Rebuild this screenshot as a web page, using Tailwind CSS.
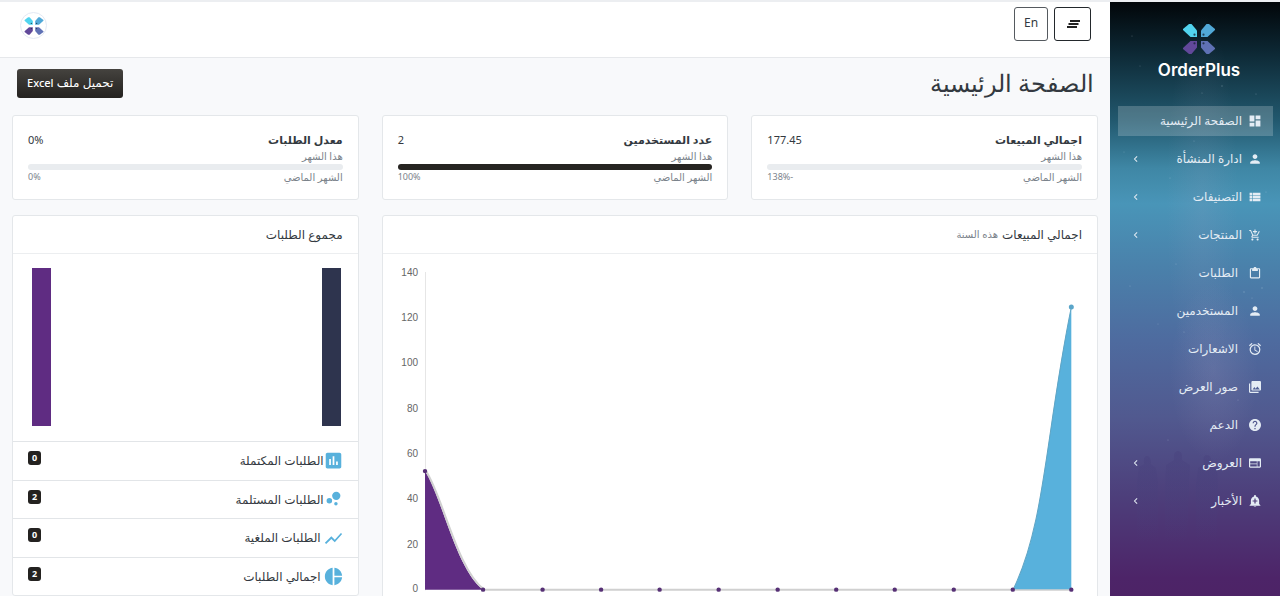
<!DOCTYPE html>
<html lang="ar" dir="rtl">
<head>
<meta charset="utf-8">
<meta name="viewport" content="width=device-width, initial-scale=1">
<title>OrderPlus</title>
<script src="https://cdn.jsdelivr.net/npm/@tailwindcss/browser@4"></script>
</head>
<body class="h-screen overflow-hidden bg-[#f8f9fb] pt-0.5 font-['Noto_Sans','DejaVu_Sans',sans-serif] text-[#333940] shadow-[inset_0_2px_0_#eceef1]">

<svg class="hidden" aria-hidden="true">
  <defs>
    <symbol id="logo" viewBox="0 0 34 34">
      <path fill="#51d4ef" d="M1 7 7 2h2.500l5.500 6.500V15H8.500L1 8z"/>
      <path fill="#51a9d8" d="M33 7 27 2h-2.500L19 8.500V15h6.500L33 8z"/>
      <path fill="#61489a" d="M1 27 7 32h2.500l5.500-6.500V19H8.500L1 26z"/>
      <path fill="#5f71b5" d="M33 27 27 32h-2.500L19 25.500V19h6.500L33 26z"/>
      <g fill="#123" fill-opacity=".75"><circle cx="12.500" cy="12.700" r="1.100"/><circle cx="21.500" cy="12.700" r="1.100"/><circle cx="12.500" cy="21.300" r="1.100"/><circle cx="21.500" cy="21.300" r="1.100"/></g>
    </symbol>
    <symbol id="person" viewBox="0 0 24 24"><path d="M12 12c2.210 0 4-1.790 4-4s-1.790-4-4-4-4 1.790-4 4 1.790 4 4 4zm0 2c-2.670 0-8 1.340-8 4v2h16v-2c0-2.660-5.330-4-8-4z"/></symbol>
    <symbol id="chev" viewBox="0 0 8 10"><path d="M5.500 1.500 2 5l3.500 3.500" fill="none" stroke="currentColor" stroke-width="1.400"/></symbol>
  </defs>
</svg>

<div class="flex h-full">

  <aside class="relative w-[170px] shrink-0 overflow-hidden bg-[linear-gradient(180deg,#020609_0%,#0c2632_8%,#22596f_20%,#3f87a5_28%,#4995b8_34%,#4a80aa_45%,#4e6b9f_57%,#51598f_70%,#4d3f7b_83%,#4d2468_97%,#4d2366_100%)] text-[#e4ecf4]">
    <svg class="absolute inset-0 h-full w-full" viewBox="0 0 170 594" preserveAspectRatio="none" aria-hidden="true">
      <defs>
        <radialGradient id="haze"><stop offset="0" stop-color="#b9a8c8" stop-opacity=".16"/><stop offset="1" stop-color="#b9a8c8" stop-opacity="0"/></radialGradient>
        <linearGradient id="crowd" x2="0" y2="1"><stop offset="0" stop-color="#47407c" stop-opacity=".4"/><stop offset="1" stop-color="#47407c" stop-opacity="0"/></linearGradient>
      </defs>
      <ellipse cx="92" cy="200" rx="36" ry="190" fill="url(#haze)" opacity=".7"/>
      <ellipse cx="104" cy="370" rx="44" ry="90" fill="url(#haze)"/>
      <path fill="url(#crowd)" d="M27 540v-60l2-15 5-3q-1-8 3-8t4 8l5 4 2 14v60zM55 540v-55l1-22 8-5q-1-9 4-9t4 9l8 5-1 22-2 55zM86 540v-58l2-16 6-4q-2-9 3-9t4 9l6 4 1 16-1 58z"/>
      <g fill="#dce9f5" fill-opacity=".3"><circle cx="22" cy="34" r=".6"/><circle cx="92" cy="91" r=".6"/><circle cx="112" cy="84" r=".7"/><circle cx="30" cy="64" r=".5"/><circle cx="84" cy="139" r=".6"/><circle cx="60" cy="176" r=".6"/><circle cx="146" cy="92" r=".6"/><circle cx="134" cy="290" r=".7"/><circle cx="142" cy="296" r=".6"/><circle cx="152" cy="286" r=".7"/><circle cx="20" cy="284" r=".6"/><circle cx="66" cy="262" r=".6"/><circle cx="48" cy="322" r=".5"/><circle cx="118" cy="236" r=".6"/><circle cx="74" cy="330" r=".6"/><circle cx="58" cy="438" r=".6"/><circle cx="106" cy="420" r=".7"/><circle cx="14" cy="150" r=".5"/><circle cx="156" cy="190" r=".6"/><circle cx="128" cy="398" r=".6"/></g>
    </svg>
    <div class="relative">
      <a href="#" class="flex flex-col items-center ps-2 pt-5 text-white" dir="ltr">
        <svg class="h-[34px] w-[34px]"><use href="#logo"/></svg>
        <span class="font-['Inter',sans-serif] text-[17px] leading-7 font-semibold">OrderPlus</span>
      </a>
      <nav class="mt-[22px] flex flex-col gap-2 ps-[7px] pe-2 text-[12px]">
        <a href="#" class="flex h-[30px] items-center bg-white/20 ps-3"><svg class="h-3 w-3" viewBox="2 2 20 20" fill="currentColor"><path d="M3 13h8V3H3v10zm0 8h8v-6H3v6zm10 0h8V11h-8v10zm0-18v6h8V3h-8z"/></svg><span class="ms-[7px]">الصفحة الرئيسية</span></a>
        <a href="#" class="flex h-[30px] items-center ps-3"><svg class="h-3 w-3" viewBox="2 2 20 20" fill="currentColor"><use href="#person" width="24" height="24"/></svg><span class="ms-[7px]">ادارة المنشأة</span><svg class="ms-auto me-[15px] h-2 w-1.5"><use href="#chev"/></svg></a>
        <a href="#" class="flex h-[30px] items-center ps-3"><svg class="h-3 w-3" viewBox="2 2 20 20" fill="currentColor"><path d="M3 14h4v-4H3v4zm0 5h4v-4H3v4zM3 9h4V5H3v4zm5 5h13v-4H8v4zm0 5h13v-4H8v4zM8 5v4h13V5H8z"/></svg><span class="ms-[7px]">التصنيفات</span><svg class="ms-auto me-[15px] h-2 w-1.5"><use href="#chev"/></svg></a>
        <a href="#" class="flex h-[30px] items-center ps-3"><svg class="h-3 w-3" viewBox="1 0 22 23" fill="currentColor"><path d="M11 9h2V6h3V4h-3V1h-2v3H8v2h3v3zm-4 9c-1.100 0-1.990.9-1.990 2S5.900 22 7 22s2-.9 2-2-.9-2-2-2zm10 0c-1.100 0-1.990.9-1.990 2s.89 2 1.990 2 2-.9 2-2-.9-2-2-2zm-9.830-3.250l.03-.12.9-1.630h7.450c.75 0 1.410-.41 1.750-1.030l3.860-7.010L19.420 4h-.01l-1.100 2-2.760 5H8.530l-.13-.27L6.160 6l-.95-2-.94-2H1v2h2l3.600 7.590-1.350 2.450c-.16.28-.25.61-.25.960 0 1.100.9 2 2 2h12v-2H7.420c-.13 0-.25-.11-.25-.25z"/></svg><span class="ms-[7px]">المنتجات</span><svg class="ms-auto me-[15px] h-2 w-1.5"><use href="#chev"/></svg></a>
        <a href="#" class="flex h-[30px] items-center ps-3"><svg class="h-3 w-3" viewBox="2 1 20 21" fill="currentColor"><path d="M19 3h-4.180C14.400 1.840 13.300 1 12 1s-2.400.84-2.820 2H5c-1.100 0-2 .9-2 2v14c0 1.100.9 2 2 2h14c1.100 0 2-.9 2-2V5c0-1.100-.9-2-2-2zm0 16H5V5h2v3h10V5h2v14z"/></svg><span class="ms-[11px]">الطلبات</span></a>
        <a href="#" class="flex h-[30px] items-center ps-3"><svg class="h-3 w-3" viewBox="2 2 20 20" fill="currentColor"><use href="#person" width="24" height="24"/></svg><span class="ms-[11px]">المستخدمين</span></a>
        <a href="#" class="flex h-[30px] items-center ps-3"><svg class="h-3 w-3" viewBox="2 2 20 20" fill="currentColor"><path d="M22 5.720l-4.600-3.860-1.290 1.530 4.600 3.860L22 5.720zM7.880 3.390L6.600 1.860 2 5.710l1.290 1.530 4.590-3.850zM12.500 8H11v6l4.750 2.850.75-1.230-4-2.370V8zM12 4c-4.970 0-9 4.030-9 9s4.020 9 9 9a9 9 0 0 0 0-18zm0 16c-3.870 0-7-3.130-7-7s3.130-7 7-7 7 3.130 7 7-3.130 7-7 7z"/></svg><span class="ms-[11px]">الاشعارات</span></a>
        <a href="#" class="flex h-[30px] items-center ps-3"><svg class="h-3 w-3" viewBox="2 2 20 20" fill="currentColor"><path d="M22 16V4c0-1.100-.9-2-2-2H8c-1.100 0-2 .9-2 2v12c0 1.100.9 2 2 2h12c1.100 0 2-.9 2-2zm-11-4l2.030 2.710L16 11l4 5H8l3-4zM2 6v14c0 1.100.9 2 2 2h14v-2H4V6H2z"/></svg><span class="ms-[11px]">صور العرض</span></a>
        <a href="#" class="flex h-[30px] items-center ps-3"><svg class="h-3 w-3" viewBox="2 2 20 20" fill="currentColor"><path d="M12 2C6.480 2 2 6.480 2 12s4.480 10 10 10 10-4.480 10-10S17.520 2 12 2zm1 17h-2v-2h2v2zm2.070-7.750l-.9.920C13.450 12.900 13 13.500 13 15h-2v-.5c0-1.100.45-2.100 1.170-2.830l1.240-1.260c.37-.36.59-.86.59-1.410 0-1.100-.9-2-2-2s-2 .9-2 2H8c0-2.210 1.790-4 4-4s4 1.790 4 4c0 .88-.36 1.680-.93 2.250z"/></svg><span class="ms-[11px]">الدعم</span></a>
        <a href="#" class="flex h-[30px] items-center ps-3"><svg class="h-3 w-3" viewBox="2 2 20 20" fill="currentColor"><path d="M20 4H4c-1.100 0-1.990.9-1.990 2L2 18c0 1.100.9 2 2 2h16c1.100 0 2-.9 2-2V6c0-1.100-.9-2-2-2zm-5 14H4v-4h11v4zm0-5H4V9h11v4zm5 5h-4V9h4v9z"/></svg><span class="ms-[7px]">العروض</span><svg class="ms-auto me-[15px] h-2 w-1.5"><use href="#chev"/></svg></a>
        <a href="#" class="flex h-[30px] items-center ps-3"><svg class="h-3 w-3" viewBox="2 2 20 20" fill="currentColor"><path d="M10.010 21.010c0 1.100.89 1.990 1.990 1.990s1.990-.89 1.990-1.990h-3.980zm8.870-4.190V11c0-3.250-2.250-5.970-5.290-6.690v-.72C13.590 2.710 12.880 2 12 2s-1.590.71-1.590 1.590v.72C7.370 5.030 5.120 7.750 5.120 11v5.820L3 18.940V20h18v-1.060l-2.120-2.120zM16 13.010h-3v3h-2v-3H8V11h3V8h2v3h3v2.010z"/></svg><span class="ms-[7px]">الأخبار</span><svg class="ms-auto me-[15px] h-2 w-1.5"><use href="#chev"/></svg></a>
      </nav>
    </div>
  </aside>

  <div class="min-w-0 flex-1">
    <header class="flex h-14 items-start justify-between border-b border-[#e6e8eb] bg-white ps-[19px] pe-5 pt-[5px]">
      <div class="flex gap-1.5">
        <button type="button" aria-label="القائمة" class="flex h-[34px] w-[37px] items-center justify-center rounded-[3px] border border-[#23282c]"><svg class="h-3 w-3.5" viewBox="0 0 14 12" stroke="#222" stroke-width="2"><path d="M4 3h10M2.500 6h10M1 9h10"/></svg></button>
        <button type="button" class="h-[34px] w-[34px] rounded-[3px] border border-[#555a5f] pb-0.5 text-[12px]">En</button>
      </div>
      <a href="#" aria-label="OrderPlus" class="mt-[5px] flex h-[27px] w-[27px] items-center justify-center rounded-full border border-[#e3e9f4]"><svg class="h-5 w-5"><use href="#logo"/></svg></a>
    </header>

    <main class="px-3">
      <div class="flex items-center justify-between ps-1 pe-[5px] pt-2.5">
        <h1 class="text-[24px] leading-[30px] font-light">الصفحة الرئيسية</h1>
        <button type="button" class="h-[29px] rounded-[3px] bg-linear-to-b from-[#45433f] to-[#24221f] px-2.5 text-[12px] font-medium text-white">تحميل ملف <span class="text-[11px]">Excel</span></button>
      </div>

      <div class="mt-[17px] grid grid-cols-3 gap-x-[23px] gap-y-[15px]">
        <section class="h-[85px] rounded-[3px] border border-[#e4e7ea] bg-white px-[15px] pt-4">
          <div class="flex justify-between text-[11px] leading-4"><h2 class="font-bold">اجمالي المبيعات</h2><span>177.45</span></div>
          <p class="text-[10px] leading-4 text-[#7b838b]">هذا الشهر</p>
          <div class="h-1.5 rounded-full bg-[#e9ecef]"></div>
          <div class="flex justify-between text-[10px] leading-[14px] text-[#7b838b]"><span>الشهر الماضي</span><span dir="ltr" class="text-[9px]">138%-</span></div>
        </section>
        <section class="h-[85px] rounded-[3px] border border-[#e4e7ea] bg-white px-[15px] pt-4">
          <div class="flex justify-between text-[11px] leading-4"><h2 class="font-bold">عدد المستخدمين</h2><span>2</span></div>
          <p class="text-[10px] leading-4 text-[#7b838b]">هذا الشهر</p>
          <div class="h-1.5 rounded-full bg-[#262421]"></div>
          <div class="flex justify-between text-[10px] leading-[14px] text-[#7b838b]"><span>الشهر الماضي</span><span dir="ltr" class="text-[9px]">100%</span></div>
        </section>
        <section class="h-[85px] rounded-[3px] border border-[#e4e7ea] bg-white px-[15px] pt-4">
          <div class="flex justify-between text-[11px] leading-4"><h2 class="font-bold">معدل الطلبات</h2><span dir="ltr">0%</span></div>
          <p class="text-[10px] leading-4 text-[#7b838b]">هذا الشهر</p>
          <div class="h-1.5 rounded-full bg-[#e9ecef]"></div>
          <div class="flex justify-between text-[10px] leading-[14px] text-[#7b838b]"><span>الشهر الماضي</span><span dir="ltr" class="text-[9px]">0%</span></div>
        </section>

        <section class="col-span-2 rounded-[3px] border border-[#e4e7ea] bg-white">
          <h2 class="flex h-[38px] items-center gap-1 border-b border-[#eceef0] px-[15px] text-[12px]">اجمالي المبيعات <small class="text-[10px] text-[#7b838b]">هذه السنة</small></h2>
          <svg class="block w-full" viewBox="1 0 714 344" direction="ltr" role="img" aria-label="اجمالي المبيعات">
            <g class="font-['Liberation_Sans',sans-serif] text-[10px]" fill="#666" text-anchor="end">
              <text x="36" y="22">140</text><text x="36" y="67">120</text><text x="36" y="112">100</text><text x="36" y="158">80</text><text x="36" y="203">60</text><text x="36" y="248">40</text><text x="36" y="294">20</text><text x="36" y="338">0</text>
            </g>
            <path d="M43.500 18v318" stroke="#e6e6e6"/>
            <path d="M43 217C60 243 74 315 101 335.500H43z" fill="#5f2c82"/>
            <path d="M44 217C61 243 75 315 102 335.500H689" fill="none" stroke="#d0d0d0" stroke-width="2"/>
            <path d="M631 335C663 270 663 180 689 53V335z" fill="#58b1dc"/>
            <path d="M631 335C663 270 663 180 689 53" fill="none" stroke="#5fa4c4" stroke-width="1"/>
            <g fill="#563075"><circle cx="43" cy="217" r="2.200"/><circle cx="101" cy="335.500" r="2.200"/><circle cx="160.500" cy="335.500" r="2.200"/><circle cx="219" cy="335.500" r="2.200"/><circle cx="277.500" cy="335.500" r="2.200"/><circle cx="336.500" cy="335.500" r="2.200"/><circle cx="395.500" cy="335.500" r="2.200"/><circle cx="454" cy="335.500" r="2.200"/><circle cx="512.500" cy="335.500" r="2.200"/><circle cx="571.500" cy="335.500" r="2.200"/><circle cx="630.500" cy="335.500" r="2.200"/><circle cx="689" cy="335.500" r="2.200"/></g>
            <circle cx="689" cy="53" r="2.500" fill="#5aa5c9"/>
          </svg>
        </section>

        <section class="self-start rounded-[3px] border border-[#e4e7ea] bg-white">
          <h2 class="flex h-[38px] items-center border-b border-[#eceef0] px-[15px] text-[12px]">مجموع الطلبات</h2>
          <div class="flex h-[187px] justify-between ps-[17px] pe-[19px] pt-3.5">
            <div class="h-[158px] w-[19px] bg-[#2e344e]"></div>
            <div class="h-[158px] w-[19px] bg-[#5f2c82]"></div>
          </div>
          <ul class="text-[12px]">
            <li class="flex h-[39px] items-center border-t border-[#e2e5e8] px-[15px]"><svg class="h-[19px] w-[19px]" viewBox="1 2 22 22" fill="#58b1dc"><path d="M19 3H5c-1.100 0-2 .9-2 2v14c0 1.100.9 2 2 2h14c1.100 0 2-.9 2-2V5c0-1.100-.9-2-2-2zM9 17H7v-7h2v7zm4 0h-2V7h2v10zm4 0h-2v-4h2v4z"/></svg><span>الطلبات المكتملة</span><span class="ms-auto mb-1.5 rounded-[3px] bg-[#242220] px-1 text-[9px] leading-[14px] font-bold text-white">0</span></li>
            <li class="flex h-[38px] items-center border-t border-[#e2e5e8] px-[15px]"><svg class="h-[19px] w-[19px]" viewBox="1 2 22 22" fill="#58b1dc"><circle cx="7.200" cy="14.400" r="3.200"/><circle cx="14.800" cy="18" r="2"/><circle cx="15.200" cy="8.800" r="4.800"/></svg><span>الطلبات المستلمة</span><span class="ms-auto mb-1.5 rounded-[3px] bg-[#242220] px-1 text-[9px] leading-[14px] font-bold text-white">2</span></li>
            <li class="flex h-[39px] items-center border-t border-[#e2e5e8] px-[15px]"><svg class="h-[19px] w-[19px]" viewBox="1 2 22 20" fill="#58b1dc"><path d="M3.500 18.490l6-6.010 4 4L22 6.920l-1.410-1.410-7.090 7.970-4-4L2 16.990z"/></svg><span class="ms-[3px]">الطلبات الملغية</span><span class="ms-auto mb-1.5 rounded-[3px] bg-[#242220] px-1 text-[9px] leading-[14px] font-bold text-white">0</span></li>
            <li class="flex h-[38px] items-center border-t border-[#e2e5e8] px-[15px]"><svg class="h-[19px] w-[19px]" viewBox="1 1 22 22" fill="#58b1dc"><path d="M11 2v20c-5.070-.5-9-4.790-9-10s3.930-9.500 9-10zm2.030 0v8.990H22c-.47-4.740-4.240-8.520-8.970-8.990zm0 11.010V22c4.740-.47 8.500-4.250 8.970-8.990h-8.970z"/></svg><span class="ms-[3px]">اجمالي الطلبات</span><span class="ms-auto mb-1.5 rounded-[3px] bg-[#242220] px-1 text-[9px] leading-[14px] font-bold text-white">2</span></li>
          </ul>
        </section>
      </div>
    </main>
  </div>
</div>
</body>
</html>
